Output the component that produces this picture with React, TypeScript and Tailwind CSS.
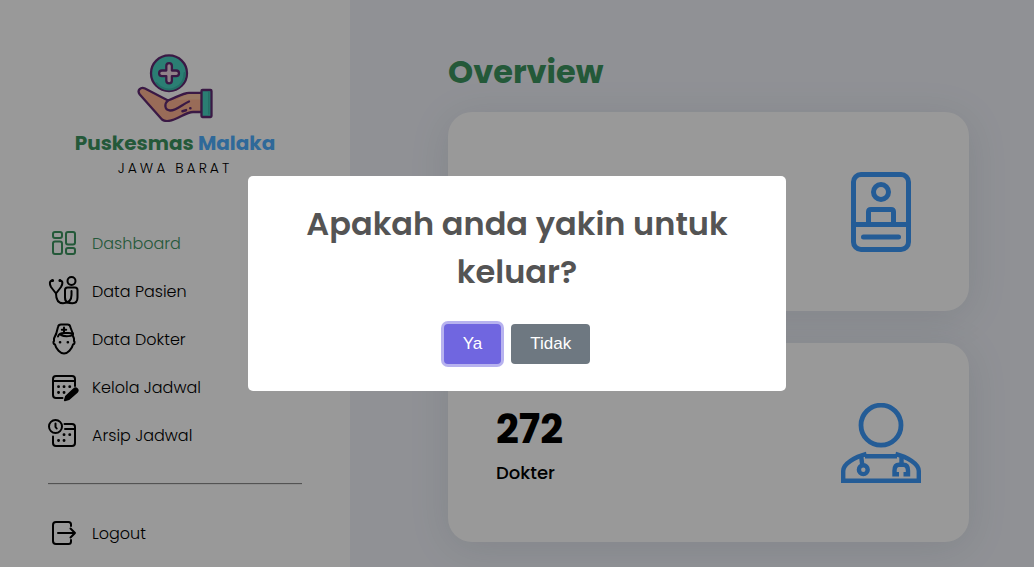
import type { ReactNode } from "react";

function Logo() {
  return (
    <svg viewBox="0 0 76 68" className="h-[68px] w-[76px]" fill="none" stroke="#622b73" strokeWidth="2.3" strokeLinecap="round" strokeLinejoin="round" aria-hidden="true">
      <ellipse cx="32" cy="19.200" rx="18" ry="17.800" fill="#48d3c0" />
      <path d="M19.500 29a15.500 15.500 0 0 0 28-10" stroke="#3cb8aa" strokeWidth="2" />
      <path d="M29.300 16.500v-4.500a2.800 2.800 0 0 1 5.600 0v4.500h4.300a2.800 2.800 0 0 1 0 5.600h-4.300v4.400a2.800 2.800 0 0 1-5.600 0v-4.400h-4.400a2.800 2.800 0 0 1 0-5.600z" fill="#f0d9e4" />
      <path d="M2.800 40.500C-.5 36 4 32.500 8 34.500L31 46.500C40 43 46 39 52 39h13v19H56c-6 0-12 5-19 7.500-6 2.300-9 2.300-12 0z" fill="#ffb593" />
      <path d="M39 46c6-3 9-5.500 14-6h11v5.500H52z" fill="#ffc9a6" stroke="none" />
      <path d="M31 46.500c-4 3.500-3.500 9.500 2 10 6 .5 12-6 19-9" />
      <path d="M45.500 57.200l3.500-1M53.300 54.300h.1" strokeWidth="2.600" />
      <rect x="64.500" y="36" width="10" height="27" rx="1" fill="#48d3c0" />
      <path d="M71.800 38v22" stroke="#3cb8aa" strokeWidth="1.500" />
    </svg>
  );
}

function MenuIcon({ children }: { children: ReactNode }) {
  return (
    <svg viewBox="0 0 32 32" className="size-8 shrink-0" fill="none" stroke="currentColor" strokeWidth="2" strokeLinecap="round" strokeLinejoin="round" aria-hidden="true">
      {children}
    </svg>
  );
}

const menu = [
  {
    label: "Dashboard",
    active: true,
    icon: (
      <>
        <rect x="5" y="5" width="9" height="6" rx="2" />
        <rect x="18" y="5" width="9" height="12.500" rx="2" />
        <rect x="5" y="14.500" width="9" height="12.500" rx="2" />
        <rect x="18" y="21" width="9" height="6" rx="2" />
      </>
    ),
  },
  {
    label: "Data Pasien",
    icon: (
      <>
        <circle cx="23.500" cy="6" r="4" />
        <path d="M4.500 5.500C1 6 1.500 9 3 12l5 6.500L13 12c1.800-3 2.300-6-1-6.500" />
        <path d="M4.500 5.500h.1M12 5.500h-.1" strokeWidth="3" />
        <path d="M8 18.500C8 24 9.500 28.200 15 28.200c6 0 8.500-2.700 8.500-8.200v-4" />
        <path d="M19.500 27.500c-2-1-2.500-2.500-2.500-5V15c0-2 1-2.500 2.500-2.500H27c1.500 0 2.500.7 2.500 2.500v7.500c0 3.500-2 5.700-5 5.700-2.500 0-4-.2-5-.7" />
      </>
    ),
  },
  {
    label: "Data Dokter",
    icon: (
      <>
        <path d="M8 11.500 10 4q.5-2.500 3-2.500h6.500q2.500 0 2.800 2.500L25 11" />
        <path d="M10 13.500c1-3 3-3.500 6-3.500 4 0 6-.5 9 .5 0 3-8 3.500-12 1.500" />
        <path d="M8 11 6 15.500v2.500c-1 1-.7 3 1 3.500C8 26 12.500 30.500 16 30.500s8-4.500 9-9c1.700-.5 2-2.500 1-3.500v-2.500L24.500 12" />
        <path d="M16 4.500v4.400M13.800 6.700h4.400" />
        <path d="M12 19.300h.1M19.800 19.300h.1" strokeWidth="2.600" />
      </>
    ),
  },
  {
    label: "Kelola Jadwal",
    icon: (
      <>
        <path d="M14.500 27H8q-3 0-3-3V8q0-3 3-3h16q3 0 3 3v7M5 10h22" />
        <path d="M10.500 15.700h.1M16 15.700h.1M21.700 15.700h.1M10.500 21.500h.1M16 21.500h.1" strokeWidth="2.800" />
        <path d="m16.800 29.300 1.200-4 8-7.300a2 2 0 0 1 3 3L21 28.200z" fill="currentColor" strokeWidth="1.800" />
      </>
    ),
  },
  {
    label: "Arsip Jadwal",
    icon: (
      <>
        <circle cx="7.500" cy="7.500" r="6.500" />
        <path d="M7.500 4.500v3.500l1.200 1.500M16.500 5H24q3 0 3 3v16q0 3-3 3H8q-3 0-3-3v-6.500M17 10h10" />
        <path d="M16 15.700h.1M21.700 15.700h.1M10.500 21.500h.1M16 21.500h.1" strokeWidth="2.800" />
      </>
    ),
  },
];

function MenuLink({ label, active, children }: { label: string; active?: boolean; children: ReactNode }) {
  return (
    <li>
      <a href="#" className={active ? "flex h-8 items-center gap-3 text-[#3c945f]" : "flex h-8 items-center gap-3 text-black"}>
        <MenuIcon>{children}</MenuIcon>
        <span className="pt-px">{label}</span>
      </a>
    </li>
  );
}

function Card({ children }: { children: ReactNode }) {
  return (
    <section className="flex h-[199px] items-center rounded-3xl bg-white px-12 shadow-[0_6px_40px_rgba(60,90,95,0.12)]">
      {children}
    </section>
  );
}

function PatientIcon() {
  return (
    <svg viewBox="0 0 80 80" className="ml-auto size-20" fill="none" stroke="#3c99fa" strokeWidth="5" strokeLinecap="round" aria-hidden="true">
      <rect x="12.500" y="2.500" width="55" height="75" rx="7.500" />
      <circle cx="40" cy="20" r="7.500" />
      <path d="M27.500 52V40q0-2.500 2.500-2.500h20q2.500 0 2.500 2.500v12M12.500 52.500h55M22.500 65h35" />
    </svg>
  );
}

function DoctorIcon() {
  return (
    <svg viewBox="0 0 80 80" className="ml-auto size-20" fill="none" stroke="#3c99fa" strokeWidth="4.400" aria-hidden="true">
      <circle cx="40" cy="22.200" r="20" strokeWidth="4.800" />
      <path d="M25.500 51C14 54 2.200 60.500 2.200 68v9.700h75.600V68c0-7.500-11.800-14-23.300-17M24 53.300h32" />
      <path d="M20.200 53.500l1 8M60.500 53v8" />
      <circle cx="22.300" cy="66.700" r="4.400" />
      <path d="M58 71.200h-4.500v-3.500q0-6 4.500-6h4.500q4.500 0 4.500 6v3.500h-4.500" />
    </svg>
  );
}

export default function App() {
  return (
    <div className="flex h-screen overflow-hidden bg-[#f0f2f9] font-['Poppins','Inter',sans-serif] text-black">
      <aside className="w-[350px] shrink-0 bg-white px-12 pt-[54px]">
        <div className="flex flex-col items-center">
          <Logo />
          <p className="mt-[6px] text-xl leading-[30px] font-bold whitespace-nowrap text-[#3c945f]">
            Puskesmas <span className="text-[#4fb0ff]">Malaka</span>
          </p>
          <p className="text-sm leading-5 font-light tracking-[3px]">JAWA BARAT</p>
        </div>
        <nav className="mt-[49px]">
          <ul className="flex flex-col gap-4 text-base font-light">
            {menu.map((item) => (
              <MenuLink key={item.label} label={item.label} active={item.active}>
                {item.icon}
              </MenuLink>
            ))}
          </ul>
          <hr className="my-8 border-y border-t-[#8a8a8a] border-b-[#eeeeee]" />
          <ul className="text-base font-light">
            <MenuLink label="Logout">
              <path d="M23 9V7.500Q23 5 20.500 5H8Q5 5 5 8v16q0 3 3 3h12.500q2.500 0 2.500-2.500V23M10 16h17M22.500 11.500 27 16l-4.500 4.500" />
            </MenuLink>
          </ul>
        </nav>
      </aside>

      <main className="min-w-0 flex-1 pt-12 pr-[65px] pl-[98px]">
        <h1 className="text-[32px] leading-[48px] font-bold text-[#3c945f]">Overview</h1>
        <div className="mt-4 flex flex-col gap-8">
          <Card>
            <PatientIcon />
          </Card>
          <Card>
            <div className="pt-1">
              <p className="text-[40px] leading-[56px] font-bold">272</p>
              <p className="text-lg leading-8 font-medium">Dokter</p>
            </div>
            <DoctorIcon />
          </Card>
        </div>
      </main>

      <div className="fixed inset-0 flex items-center justify-center bg-black/40">
        <div role="dialog" aria-modal="true" aria-labelledby="confirm-title" className="w-full max-w-[538px] rounded-[5px] bg-white px-10 pt-6 pb-[27px] text-center">
          <h2 id="confirm-title" className="text-[32px] leading-[48px] font-semibold text-[#545454]">
            Apakah anda yakin untuk keluar?
          </h2>
          <div className="mt-7 flex justify-center gap-[10px] font-['Liberation_Sans',sans-serif] text-[17px] font-medium text-white">
            <button type="button" className="h-10 rounded-[4px] bg-[#7066e0] px-[19px] ring-3 ring-[#7066e0]/50">Ya</button>
            <button type="button" className="h-10 rounded-[4px] bg-[#6e7881] px-[19px]">Tidak</button>
          </div>
        </div>
      </div>
    </div>
  );
}
